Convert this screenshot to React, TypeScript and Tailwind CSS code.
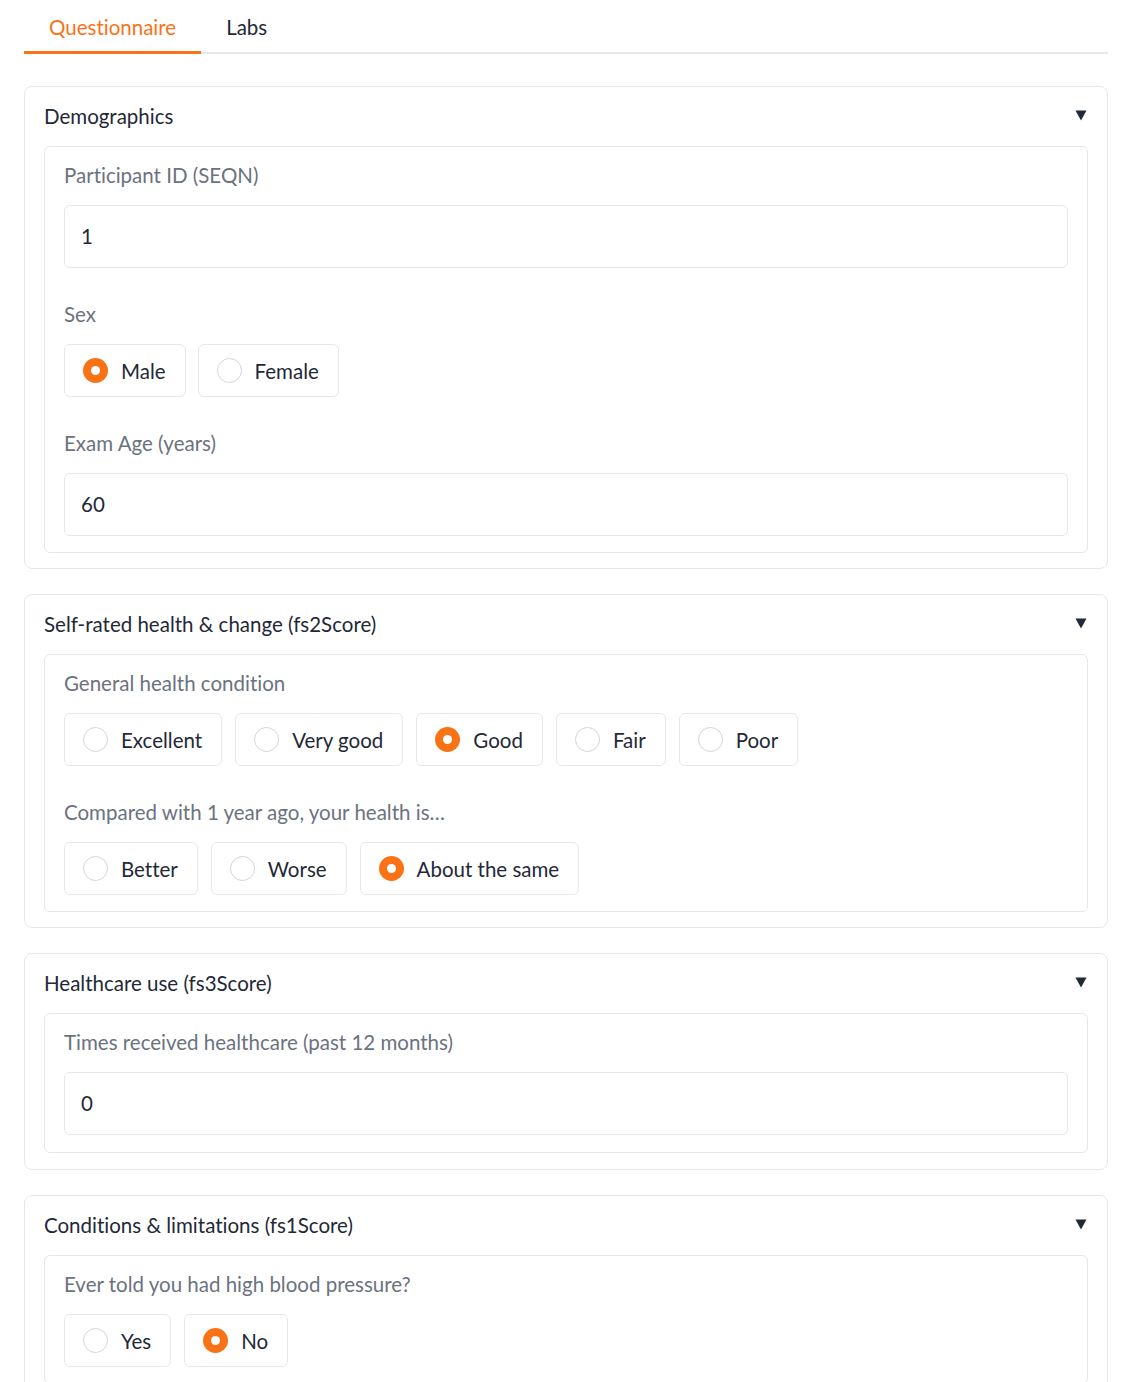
import { ReactNode } from "react";

const Radio = ({ label, checked }: { label: string; checked?: boolean }) => (
  <div className="h-[53px] flex items-center gap-[13px] pl-[18px] pr-[19px] border border-[#e5e7eb] rounded-md bg-white">
    {checked ? (
      <span className="w-[25px] h-[25px] rounded-full bg-[#f97316] flex items-center justify-center">
        <span className="w-[9px] h-[9px] rounded-full bg-white" />
      </span>
    ) : (
      <span className="w-[25px] h-[25px] rounded-full border border-[#d1d5db] bg-white" />
    )}
    <span className="text-[20.5px] leading-6 text-[#1f2937]">{label}</span>
  </div>
);

const Field = ({ label, children }: { label: string; children: ReactNode }) => (
  <div className="flex flex-col gap-[18px]">
    <div className="text-[20.5px] leading-6 text-[#6b7280]">{label}</div>
    {children}
  </div>
);

const TextBox = ({ value }: { value: string }) => (
  <div className="h-[63px] border border-[#e5e7eb] rounded-md flex items-center pl-4 text-[20.5px] text-[#1f2937]">
    {value}
  </div>
);

const Section = ({ title, tall, children }: { title: string; tall?: boolean; children: ReactNode }) => (
  <div className={`border border-[#e5e7eb] rounded-lg px-[19px] pt-[17px] ${tall ? "pb-[16px]" : "pb-[15px]"}`}>
    <div className="flex items-center justify-between h-6 mb-[18px]">
      <span className="text-[20.5px] leading-6 text-[#1f2937]">{title}</span>
      <svg width="12" height="11" viewBox="0 0 12 11" className="mr-[1px] -mt-[1px]">
        <path d="M0.5 0.5 H11.5 L6 10.5 Z" fill="#1f2937" />
      </svg>
    </div>
    <div
      className={`border border-[#e5e7eb] rounded-md px-[19px] pt-4 ${tall ? "pb-[17px]" : "pb-4"} flex flex-col gap-[34px]`}
    >
      {children}
    </div>
  </div>
);

export default function App() {
  return (
    <div
      className="bg-white min-h-screen pl-6 pr-[29px] [font-variant-ligatures:none]"
      style={{ fontFamily: "Lato, 'Noto Sans', sans-serif" }}
    >
      <div className="flex border-b-2 border-[#e5e7eb]">
        <div className="relative h-[52px] px-[25px] flex items-center pt-[3px] text-[20.5px] text-[#f97316]">
          Questionnaire
          <span className="absolute left-0 right-0 -bottom-[2px] h-[3px] bg-[#f97316]" />
        </div>
        <div className="h-[52px] px-[25px] flex items-center pt-[3px] text-[20.5px] text-[#1f2937]">Labs</div>
      </div>

      <div className="mt-8 flex flex-col gap-[25px]">
        <Section title="Demographics">
          <Field label="Participant ID (SEQN)">
            <TextBox value="1" />
          </Field>
          <Field label="Sex">
            <div className="flex gap-3">
              <Radio label="Male" checked />
              <Radio label="Female" />
            </div>
          </Field>
          <Field label="Exam Age (years)">
            <TextBox value="60" />
          </Field>
        </Section>

        <Section title="Self-rated health & change (fs2Score)">
          <Field label="General health condition">
            <div className="flex gap-[13px]">
              <Radio label="Excellent" />
              <Radio label="Very good" />
              <Radio label="Good" checked />
              <Radio label="Fair" />
              <Radio label="Poor" />
            </div>
          </Field>
          <Field label="Compared with 1 year ago, your health is…">
            <div className="flex gap-[13px]">
              <Radio label="Better" />
              <Radio label="Worse" />
              <Radio label="About the same" checked />
            </div>
          </Field>
        </Section>

        <Section title="Healthcare use (fs3Score)" tall>
          <Field label="Times received healthcare (past 12 months)">
            <TextBox value="0" />
          </Field>
        </Section>

        <Section title="Conditions & limitations (fs1Score)">
          <Field label="Ever told you had high blood pressure?">
            <div className="flex gap-[13px]">
              <Radio label="Yes" />
              <Radio label="No" checked />
            </div>
          </Field>
        </Section>
      </div>
    </div>
  );
}
